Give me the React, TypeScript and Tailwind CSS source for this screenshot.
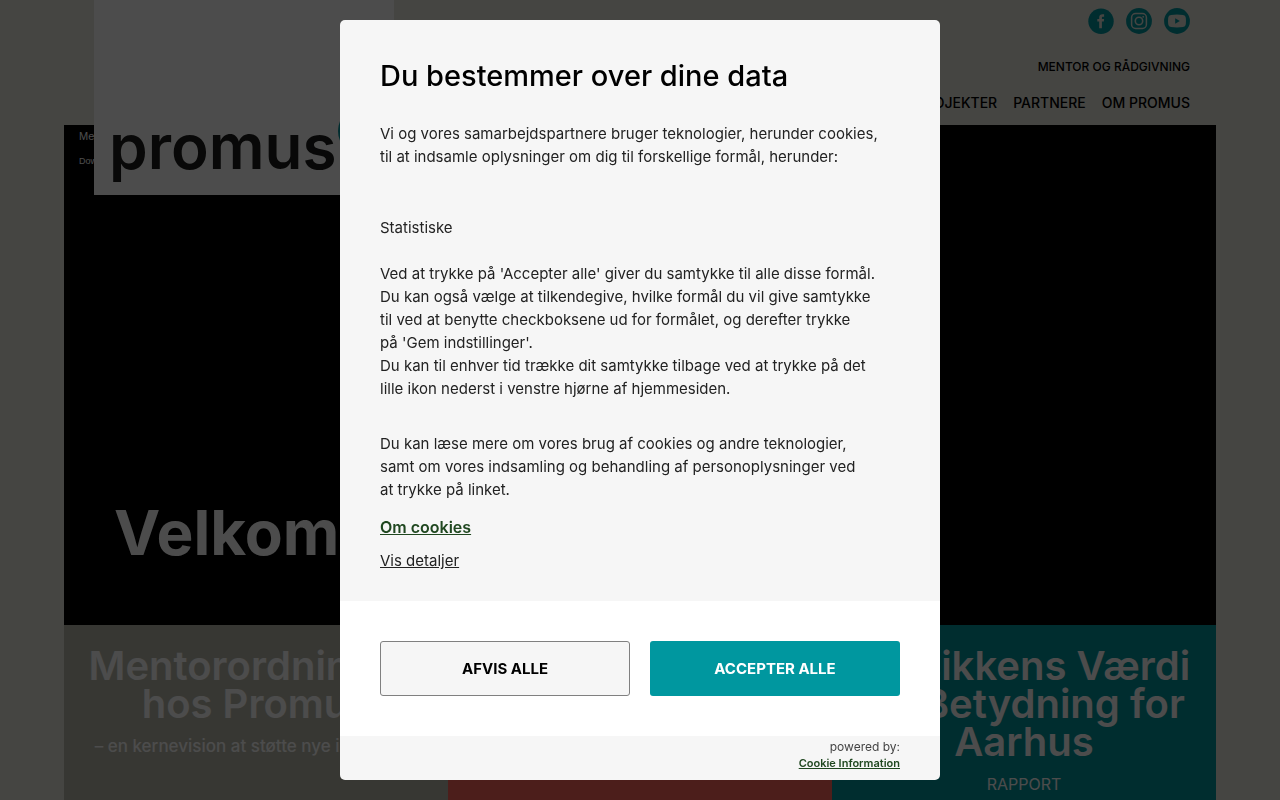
import React from "react";

function FacebookIcon() {
  return (
    <svg viewBox="0 0 26 26" className="size-[26px]" aria-hidden="true">
      <circle cx="13" cy="13.3" r="12.7" fill="#00979f" />
      <path
        d="M11.2 20.2v-6.6H9.300V11h1.9V9.5c0-2.2 1.2-3.3 3.2-3.3h1.7v2.5h-1.1c-.8 0-1.1.4-1.1 1.1V11h2.2l-.3 2.6h-1.900v6.6z"
        fill="#e6e6de"
      />
    </svg>
  );
}

function InstagramIcon() {
  return (
    <svg viewBox="0 0 26 26" className="size-[26px]" aria-hidden="true">
      <circle cx="13" cy="13" r="12.9" fill="#00979f" />
      <rect x="5.6" y="5.6" width="14.8" height="14.8" rx="4" fill="none" stroke="#e6e6de" strokeWidth="1.5" />
      <circle cx="13" cy="13" r="3.7" fill="none" stroke="#e6e6de" strokeWidth="1.6" />
      <circle cx="17.2" cy="8.8" r="0.9" fill="#e6e6de" />
    </svg>
  );
}

function YoutubeIcon() {
  return (
    <svg viewBox="0 0 26 26" className="size-[26px]" aria-hidden="true">
      <circle cx="13" cy="13" r="12.9" fill="#00979f" />
      <path
        d="M7 7q6-.8 12 0 2.600.2 2.800 2.700.4 3.300 0 6.600-.2 2.500-2.800 2.700-6 .8-12 0-2.600-.2-2.800-2.700-.4-3.300 0-6.600Q4.400 7.200 7 7z"
        fill="#e6e6de"
      />
      <path d="M11.2 10.3l4.6 2.7-4.6 2.7z" fill="#00979f" />
    </svg>
  );
}

function Header() {
  return (
    <header className="relative flex h-[125px] flex-col items-end pt-2 pr-[26px] text-black">
      <a href="#forside" className="absolute top-0 left-[30px] z-10 h-[195px] w-[300px] overflow-hidden bg-white">
        <span className="absolute top-[106px] left-[244px] size-[50px] rounded-full bg-[#00979f]" />
        <span className="absolute top-[109px] left-[15px] text-[62px] leading-[76px] font-semibold text-[#1d1d1b]">
          promus
        </span>
      </a>
      <div className="flex gap-3">
        <a href="#facebook" aria-label="Facebook"><FacebookIcon /></a>
        <a href="#instagram" aria-label="Instagram"><InstagramIcon /></a>
        <a href="#youtube" aria-label="YouTube"><YoutubeIcon /></a>
      </div>
      <a href="#mentor" className="mt-6 text-xs leading-[18px] font-medium">MENTOR OG RÅDGIVNING</a>
      <nav className="mt-[17px] flex gap-4 text-sm leading-5 font-medium">
        <a href="#projekter">PROJEKTER</a>
        <a href="#partnere">PARTNERE</a>
        <a href="#om">OM PROMUS</a>
      </nav>
    </header>
  );
}

function Hero() {
  return (
    <section className="flex h-[500px] flex-col justify-between bg-black pb-14 text-white">
      <div className="px-[15px] pt-[3px] font-['Liberation_Sans',sans-serif]">
        <p className="text-[11px] leading-4">Media error</p>
        <p className="mt-[9px] text-[9px] leading-4">Download</p>
      </div>
      <h1 className="px-[50px] text-[62px] leading-[72px] font-bold">Velkommen</h1>
    </section>
  );
}

function Cards() {
  return (
    <section className="grid grow grid-cols-3 text-center text-white">
      <article className="bg-[#b9b9ab] px-[15px] pt-[22px]">
        <h2 className="text-[40px] leading-[38px] font-semibold">Mentorordningen hos Promus</h2>
        <p className="mt-[11px] text-[17px] leading-6 font-medium">– en kernevision at støtte nye i Danmark</p>
      </article>
      <article className="bg-[#fd645a]" />
      <article className="bg-[#00979f] px-[15px] pt-[22px]">
        <h2 className="text-[40px] leading-[38px] font-semibold">Musikkens Værdi og Betydning for Aarhus</h2>
        <p className="mt-[11px] text-base leading-6">RAPPORT</p>
      </article>
    </section>
  );
}

function CookieDialog() {
  return (
    <div className="fixed inset-0 z-20 flex items-start justify-center overflow-hidden bg-black/70 p-5">
      <div
        role="dialog"
        aria-modal="true"
        aria-labelledby="cookie-title"
        className="w-full max-w-[600px] overflow-hidden rounded-[5px] bg-[#f6f6f6] text-[15px] leading-[23px] text-[#222]"
      >
        <div className="px-10 pt-9 pb-[29px]">
          <h2 id="cookie-title" className="text-[29px] leading-10 font-medium text-black">
            Du bestemmer over dine data
          </h2>
          <p className="mt-[26px]">
            Vi og vores samarbejdspartnere bruger teknologier, herunder cookies,
            <br />
            til at indsamle oplysninger om dig til forskellige formål, herunder:
          </p>
          <p className="mt-12">Statistiske</p>
          <p className="mt-[23px]">
            Ved at trykke på 'Accepter alle' giver du samtykke til alle disse formål.
            <br />
            Du kan også vælge at tilkendegive, hvilke formål du vil give samtykke
            <br />
            til ved at benytte checkboksene ud for formålet, og derefter trykke
            <br />
            på 'Gem indstillinger'.
            <br />
            Du kan til enhver tid trække dit samtykke tilbage ved at trykke på det
            <br />
            lille ikon nederst i venstre hjørne af hjemmesiden.
          </p>
          <p className="mt-8">
            Du kan læse mere om vores brug af cookies og andre teknologier,
            <br />
            samt om vores indsamling og behandling af personoplysninger ved
            <br />
            at trykke på linket.
          </p>
          <a href="#cookies" className="mt-[15px] block w-fit text-base leading-[23px] font-semibold text-[#1f471f] underline">
            Om cookies
          </a>
          <button type="button" className="mt-[10px] block underline">
            Vis detaljer
          </button>
        </div>
        <div className="grid grid-cols-2 gap-5 bg-white p-10 font-bold">
          <button type="button" className="h-[55px] rounded-[3px] border border-[#808080] bg-[#f6f6f6] text-black">
            AFVIS ALLE
          </button>
          <button type="button" className="h-[55px] rounded-[3px] bg-[#00979f] text-white">
            ACCEPTER ALLE
          </button>
        </div>
        <div className="flex flex-col items-end px-10 pt-[3px] pb-[9px] text-xs leading-4 text-[#444]">
          <span>powered by:</span>
          <a href="#cookieinformation" className="text-[11px] font-semibold text-[#1f471f] underline">
            Cookie Information
          </a>
        </div>
      </div>
    </div>
  );
}

export default function App() {
  return (
    <div className="h-screen overflow-hidden bg-[#e6e6de] font-['Inter',sans-serif]">
      <div className="mx-auto flex min-h-full w-[90%] flex-col">
        <Header />
        <Hero />
        <Cards />
      </div>
      <CookieDialog />
    </div>
  );
}
